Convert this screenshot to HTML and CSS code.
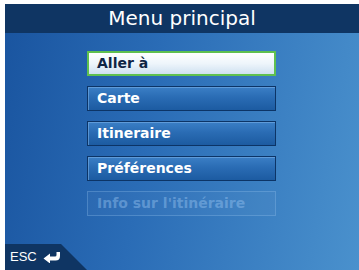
FILE: index.html
```html
<!DOCTYPE html>
<html>
<head>
<meta charset="utf-8">
<link rel="stylesheet" href="styles.css">
</head>
<body>
<div class="screen">
  <div class="header">Menu principal</div>
  <div class="content">
    <div class="menu">
      <div class="btn selected">Aller à</div>
      <div class="btn">Carte</div>
      <div class="btn">Itineraire</div>
      <div class="btn">Préférences</div>
      <div class="btn disabled">Info sur l'itinéraire</div>
    </div>
    <div class="footer">
      <div class="esc">
        <span class="esc-label">ESC</span>
        <svg class="esc-icon" width="18" height="12" viewBox="0 0 18 12">
          <path d="M0.5 7.5 L7 2.5 L7 5.5 L12 5.5 Q13.5 5.5 13.5 4 L13.5 1 L17 1 L17 5 Q17 9.5 12.5 9.5 L7 9.5 L7 12.5 Z" fill="#fff"/>
        </svg>
      </div>
    </div>
  </div>
</div>
</body>
</html>
```

FILE: styles.css
```css
html, body {
  margin: 0;
  padding: 0;
  background: #ffffff;
}

.screen {
  width: 354px;
  height: 266px;
  margin: 4px 0 0 5px;
  display: flex;
  flex-direction: column;
  overflow: hidden;
  font-family: "DejaVu Sans", Verdana, sans-serif;
}

.header {
  height: 29px;
  flex: none;
  background: #0f3563;
  color: #ffffff;
  font-size: 20px;
  line-height: 29px;
  text-align: center;
}

.content {
  flex: 1;
  display: flex;
  flex-direction: column;
  background: linear-gradient(100deg, #1a55a0 0%, #2a6cb6 40%, #4a91cd 100%);
}

.menu {
  display: flex;
  flex-direction: column;
  gap: 10px;
  margin: 18px 0 0 82px;
  width: 189px;
}

.btn {
  box-sizing: border-box;
  height: 25px;
  padding-left: 9px;
  font-size: 14px;
  font-weight: bold;
  line-height: 22px;
  color: #ffffff;
  white-space: nowrap;
  overflow: hidden;
  border: 1px solid #0c3466;
  background: linear-gradient(180deg, #3b7fc6 0%, #2a6cb4 45%, #1c5ba1 100%);
  box-shadow: inset 1px 1px 0 rgba(120, 175, 230, 0.6);
}

.btn.selected {
  color: #0f2545;
  border: 2px solid #5fc04f;
  padding-left: 8px;
  line-height: 21px;
  background: linear-gradient(180deg, #ffffff 0%, #eef5fb 50%, #cfe1f1 100%);
  box-shadow: none;
}

.btn.disabled {
  color: rgba(150, 195, 240, 0.45);
  background: rgba(255, 255, 255, 0.03);
  border: 1px solid rgba(150, 195, 240, 0.3);
  box-shadow: none;
}

.footer {
  margin-top: auto;
  display: flex;
}

.esc {
  width: 82px;
  height: 26px;
  background: #0f3563;
  clip-path: polygon(0 0, 56px 0, 82px 100%, 0 100%);
  display: flex;
  align-items: center;
  padding-left: 5px;
  box-sizing: border-box;
  gap: 6px;
}

.esc-label {
  color: #ffffff;
  font-family: "Liberation Sans", Arial, sans-serif;
  font-size: 13px;
  line-height: 14px;
}

.esc-icon {
  display: block;
}
```
